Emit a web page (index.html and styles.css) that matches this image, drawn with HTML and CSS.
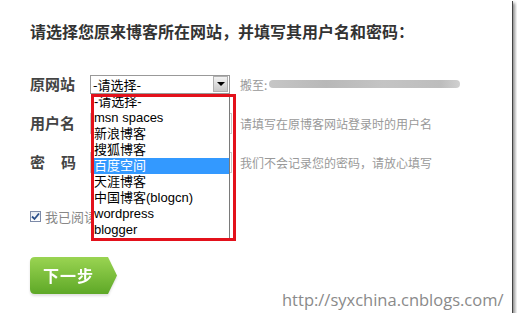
FILE: index.html
```html
<!DOCTYPE html>
<html lang="zh-CN">
<head>
    <meta charset="UTF-8">
    <meta name="viewport" content="width=device-width, initial-scale=1.0">
    <title>博客搬家</title>
    <link rel="stylesheet" href="styles.css">
</head>
<body>
    <div class="shot">
        <h2 class="title">请选择您原来博客所在网站，并填写其用户名和密码：</h2>

        <div class="form">
            <div class="row">
                <span class="label">原网站</span>
                <div class="select-wrap">
                    <div class="select">
                        <span>-请选择-</span>
                        <span class="arrow"></span>
                    </div>
                    <ul class="listbox">
                        <li>-请选择-</li>
                        <li>msn spaces</li>
                        <li>新浪博客</li>
                        <li>搜狐博客</li>
                        <li class="active">百度空间</li>
                        <li>天涯博客</li>
                        <li>中国博客(blogcn)</li>
                        <li>wordpress</li>
                        <li>blogger</li>
                    </ul>
                    <div class="mark"></div>
                </div>
                <span class="hint">搬至:<span class="blur"></span></span>
            </div>

            <div class="row">
                <span class="label">用户名</span>
                <span class="input"></span>
                <span class="hint">请填写在原博客网站登录时的用户名</span>
            </div>

            <div class="row">
                <span class="label spaced">密码</span>
                <span class="input"></span>
                <span class="hint">我们不会记录您的密码，请放心填写</span>
            </div>

            <div class="agree">
                <span class="checkbox">
                    <svg width="9" height="9" viewBox="0 0 9 9"><path d="M1 4.5 L3.5 7 L8 1.5" fill="none" stroke="#2a4f8a" stroke-width="1.8"/></svg>
                </span>
                <span class="agree-text">我已阅读</span>
            </div>

            <div class="next">
                <svg class="next-bg" width="88" height="37" viewBox="0 0 88 37">
                    <defs>
                        <linearGradient id="g" x1="0" y1="0" x2="0" y2="1">
                            <stop offset="0" stop-color="#9ad452"/>
                            <stop offset="1" stop-color="#5ea827"/>
                        </linearGradient>
                    </defs>
                    <path d="M5 0 H78 L87 18.5 L78 37 H5 Q0 37 0 32 V5 Q0 0 5 0 Z" fill="url(#g)"/>
                </svg>
                <span class="next-text">下一步</span>
            </div>
        </div>

        <div class="watermark">http://syxchina.cnblogs.com/</div>
    </div>
</body>
</html>
```

FILE: styles.css
```css
body {
    margin: 0;
    background: #fff;
    font-family: "Noto Sans CJK SC", "Liberation Sans", sans-serif;
}
.shot {
    position: relative;
    width: 512px;
    height: 313px;
    padding: 21px 0 0 30px;
    box-sizing: border-box;
    background: #fff;
    box-shadow: 1px 1px 0 #444, 3px 3px 3px rgba(0, 0, 0, 0.45);
}
.title {
    margin: 0;
    font-size: 16px;
    line-height: 20px;
    font-weight: bold;
    color: #333;
}
.form {
    margin-top: 33px;
}
.row {
    display: flex;
    align-items: center;
    height: 20px;
    margin-bottom: 19px;
}
.label {
    flex-shrink: 0;
    width: 60px;
    font-size: 15px;
    font-weight: bold;
    color: #444;
    line-height: 20px;
    white-space: nowrap;
}
.label.spaced {
    letter-spacing: 16px;
}
.select-wrap {
    position: relative;
    width: 140px;
    height: 19px;
}
.select {
    display: flex;
    justify-content: space-between;
    align-items: center;
    height: 19px;
    border: 1px solid #999;
    box-sizing: border-box;
    font-size: 13px;
    color: #000;
    padding-left: 2px;
}
.arrow {
    width: 15px;
    height: 16px;
    margin-right: 1px;
    border: 1px solid #b0b0b0;
    box-sizing: border-box;
    background: linear-gradient(#f2f2f2, #c9c9c9);
    position: relative;
}
.arrow::after {
    content: "";
    position: absolute;
    left: 3px;
    top: 5px;
    border-left: 4px solid transparent;
    border-right: 4px solid transparent;
    border-top: 4px solid #000;
}
.listbox {
    position: absolute;
    left: 1px;
    top: 19px;
    width: 139px;
    margin: 0;
    padding: 0;
    list-style: none;
    background: #fff;
    border-right: 1px solid #7a7a7a;
    box-sizing: border-box;
    z-index: 2;
}
.listbox li {
    height: 16px;
    line-height: 16px;
    padding-left: 3px;
    font-size: 13px;
    font-family: "Liberation Sans", "Noto Sans CJK SC", sans-serif;
    color: #000;
    white-space: nowrap;
}
.listbox li.active {
    background: #3399ff;
    color: #fff;
}
.mark {
    position: absolute;
    left: 1px;
    top: 19px;
    width: 145px;
    height: 147px;
    border: 3px solid #e3111b;
    box-sizing: border-box;
    z-index: 3;
}
.hint {
    display: flex;
    align-items: center;
    margin-left: 10px;
    font-size: 12px;
    color: #999;
    white-space: nowrap;
}
.blur {
    display: inline-block;
    width: 191px;
    height: 8px;
    margin-left: 2px;
    border-radius: 4px;
    background: linear-gradient(90deg, #c6c6c6, #b8b8b8 30%, #c4c4c4 60%, #bdbdbd 90%, #d0d0d0);
}
.input {
    flex-shrink: 0;
    width: 142px;
    height: 21px;
    border: 1px solid #c8c8c8;
    box-sizing: border-box;
}
.row .input + .hint {
    margin-left: 8px;
}
.agree {
    display: flex;
    align-items: center;
    height: 16px;
    margin-top: 36px;
    font-size: 13px;
    color: #888;
}
.agree-text {
    width: 46px;
    overflow: hidden;
    white-space: nowrap;
}
.checkbox {
    display: flex;
    align-items: center;
    justify-content: center;
    width: 11px;
    height: 11px;
    margin-right: 4px;
    border: 1px solid #7c8aa8;
    background: linear-gradient(#e6ebf3, #ffffff);
    box-sizing: border-box;
}
.next {
    position: relative;
    width: 88px;
    height: 37px;
    margin-top: 33px;
    filter: drop-shadow(0 2px 1px rgba(0, 0, 0, 0.12));
}
.next-bg {
    display: block;
}
.next-text {
    position: absolute;
    left: 13px;
    top: 0;
    line-height: 37px;
    font-size: 16px;
    font-weight: bold;
    color: #fff;
    letter-spacing: 1px;
}
.watermark {
    position: absolute;
    left: 282px;
    top: 288px;
    font-family: "Open Sans", "DejaVu Sans", sans-serif;
    font-size: 16.5px;
    color: #8a8a8a;
}
```
